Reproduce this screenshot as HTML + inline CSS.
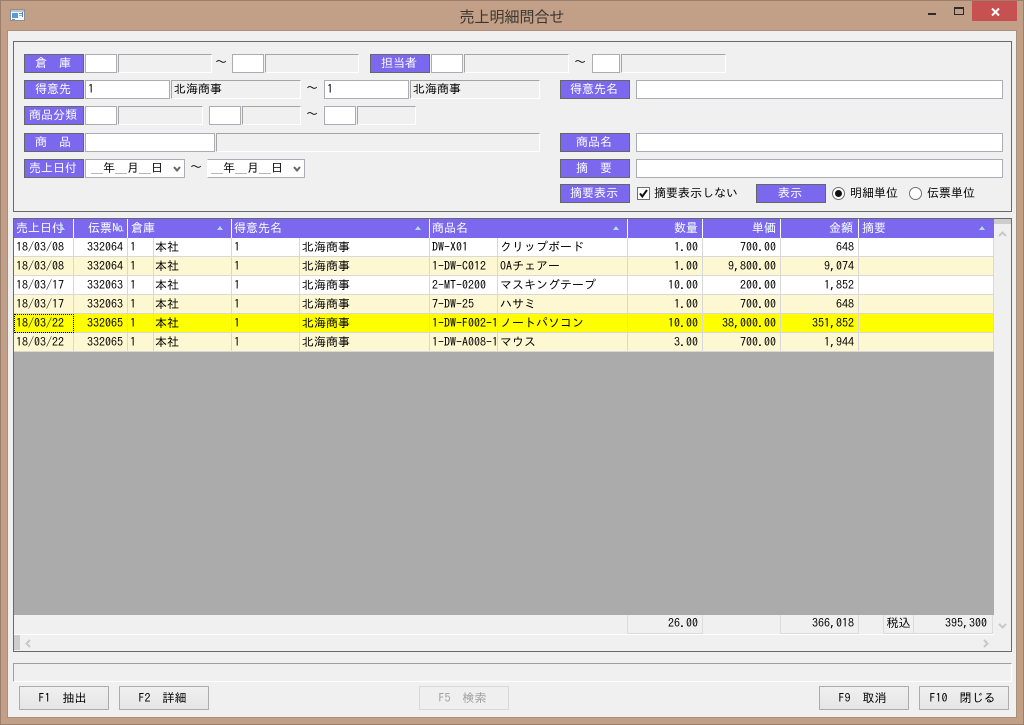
<!DOCTYPE html>
<html lang="ja"><head><meta charset="utf-8"><title>売上明細問合せ</title>
<style>
html,body{margin:0;padding:0}
body{width:1024px;height:725px;overflow:hidden;position:relative;background:#c2a088;font:12px/19px "IPAGothic","Liberation Mono","Noto Sans CJK JP",monospace;color:#000}
.a,.l,.w,.g,.s,.t,.b,.h,.f{position:absolute;box-sizing:border-box}
.l{background:#7b68ee;border:1px solid #666;color:#fff;text-align:center;height:19px;width:60px;line-height:17px;white-space:pre;padding-right:2px}
.w{background:#fff;border:1px solid #abadb3;height:19px;line-height:17px;padding-left:2px;white-space:pre}
.g{background:#f0f0f0;border:1px solid #fff;border-top-color:#a5a5a5;border-left-color:#a5a5a5;height:19px;line-height:17px;padding-left:2px;white-space:pre}
.t{white-space:pre;height:19px;line-height:19px}
.s{background:#fff;border:1px solid #abadb3;height:19px;line-height:17px;padding-left:5px;white-space:pre}
.s svg{position:absolute;right:3px;top:6px}
.b{top:686px;height:24px;width:90px;border:1px solid #acacac;background:linear-gradient(#f0f0f0,#e5e5e5);text-align:center;line-height:22px;white-space:pre;padding-right:3px}
.b.d{border-color:#d9d9d9;background:#efefef;color:#a0a0a0}
.h{top:219px;height:19px;background:#7b68ee;color:#fff;line-height:18px;white-space:pre;border-right:1px solid #fff}
.h i{position:absolute;width:0;height:0;border-left:3.5px solid transparent;border-right:3.5px solid transparent;border-bottom:4px solid #b5dce6;top:7px}
table{position:absolute;left:14px;top:238px;width:980px;border-collapse:separate;border-spacing:0;table-layout:fixed}
td{height:18px;padding:0 2px;box-sizing:content-box;border-right:1px solid #d8d8d8;border-bottom:1px solid #d8d8d8;white-space:nowrap;overflow:hidden;line-height:18px;font-size:12px}
td.n{text-align:right;padding-right:4px}
td.k{padding-left:1px}
tr.o td{background:#fff}tr.c td{background:#fdf8d2}tr.y td{background:#ff0}
.f{top:615px;height:19px;border:1px solid #dcdcdc;border-top:0;text-align:right;padding-right:4px;line-height:17px;white-space:pre}
</style></head><body>
<!-- window frame -->
<div class="a" style="left:0;top:0;width:1024px;height:725px;border:1px solid #9b7f6c"></div>
<svg class="a" style="left:10px;top:9px" width="15" height="12" viewBox="0 0 15 12"><rect x=".5" y=".5" width="14" height="11" fill="#f4f6f8" stroke="#8b8f95"/><rect x="1" y="1" width="13" height="2" fill="#b9c4d0"/><rect x="2" y="4" width="6" height="5" fill="#5b9bd5"/><rect x="9" y="4" width="4" height="1" fill="#7d8b99"/><rect x="9" y="6" width="4" height="1" fill="#a9b4bf"/><rect x="12" y="3" width="1" height="5" fill="#4a82b5"/><rect x="2" y="10" width="3" height="1" fill="#8b8f95"/></svg>
<div class="a" style="left:360px;top:6px;width:304px;height:22px;text-align:center;font:15px/22px 'Noto Sans CJK JP','IPAGothic',sans-serif;color:#3c3630">売上明細問合せ</div>
<div class="a" style="left:928px;top:13px;width:8px;height:2px;background:#2b2b2b"></div>
<div class="a" style="left:954px;top:7px;width:10px;height:8px;border:1px solid #2b2b2b;border-top-width:2px"></div>
<div class="a" style="left:972px;top:1px;width:45px;height:20px;background:#c75050"></div>
<svg class="a" style="left:991px;top:8px" width="9" height="8" viewBox="0 0 9 8"><path d="M1 0.5L8 7.5M8 0.5L1 7.5" stroke="#fff" stroke-width="2"/></svg>
<!-- client -->
<div class="a" style="left:7px;top:30px;width:1010px;height:688px;background:#f0f0f0;border:1px solid #a98f7c"></div>
<!-- search panel -->
<div class="a" style="left:13px;top:41px;width:999px;height:171px;border:1px solid #696969"></div>

<div class="l" style="left:24px;top:54px">倉　庫</div>
<div class="w" style="left:85px;top:54px;width:32px"></div>
<div class="g" style="left:118px;top:54px;width:94px"></div>
<div class="t" style="left:215px;top:53px">〜</div>
<div class="w" style="left:232px;top:54px;width:32px"></div>
<div class="g" style="left:265px;top:54px;width:94px"></div>
<div class="l" style="left:370px;top:54px">担当者</div>
<div class="w" style="left:431px;top:54px;width:32px"></div>
<div class="g" style="left:464px;top:54px;width:105px"></div>
<div class="t" style="left:574px;top:53px">〜</div>
<div class="w" style="left:592px;top:54px;width:28px"></div>
<div class="g" style="left:621px;top:54px;width:105px"></div>

<div class="l" style="left:24px;top:80px">得意先</div>
<div class="w" style="left:85px;top:80px;width:85px">1</div>
<div class="g" style="left:171px;top:80px;width:130px">北海商事</div>
<div class="t" style="left:306px;top:79px">〜</div>
<div class="w" style="left:324px;top:80px;width:85px">1</div>
<div class="g" style="left:410px;top:80px;width:130px">北海商事</div>
<div class="l" style="left:560px;top:80px;width:70px">得意先名</div>
<div class="w" style="left:636px;top:80px;width:367px"></div>

<div class="l" style="left:24px;top:106px">商品分類</div>
<div class="w" style="left:85px;top:106px;width:32px"></div>
<div class="g" style="left:118px;top:106px;width:85px"></div>
<div class="w" style="left:209px;top:106px;width:32px"></div>
<div class="g" style="left:242px;top:106px;width:59px"></div>
<div class="t" style="left:306px;top:105px">〜</div>
<div class="w" style="left:324px;top:106px;width:32px"></div>
<div class="g" style="left:357px;top:106px;width:59px"></div>

<div class="l" style="left:24px;top:133px">商　品</div>
<div class="w" style="left:85px;top:133px;width:130px"></div>
<div class="g" style="left:216px;top:133px;width:324px"></div>
<div class="l" style="left:560px;top:133px;width:70px">商品名</div>
<div class="w" style="left:636px;top:133px;width:367px"></div>

<div class="l" style="left:24px;top:159px">売上日付</div>
<div class="s" style="left:85px;top:159px;width:100px">__年__月__日<svg width="8" height="6" viewBox="0 0 8 6"><path d="M1 1L4 4.5L7 1" fill="none" stroke="#666" stroke-width="2"/></svg></div>
<div class="t" style="left:190px;top:158px">〜</div>
<div class="s" style="left:207px;top:159px;width:98px;border-left-color:#fff;padding-left:3px">__年__月__日<svg width="8" height="6" viewBox="0 0 8 6"><path d="M1 1L4 4.5L7 1" fill="none" stroke="#666" stroke-width="2"/></svg></div>
<div class="l" style="left:560px;top:159px;width:70px">摘　要</div>
<div class="w" style="left:636px;top:159px;width:367px"></div>

<div class="l" style="left:560px;top:184px;width:70px">摘要表示</div>
<svg class="a" style="left:637px;top:187px" width="13" height="13" viewBox="0 0 13 13"><rect x=".5" y=".5" width="12" height="12" fill="#fff" stroke="#707070"/><path d="M3 6.5L5.300 9.500L10 3" fill="none" stroke="#111" stroke-width="2"/></svg>
<div class="t" style="left:654px;top:184px">摘要表示しない</div>
<div class="l" style="left:756px;top:184px;width:70px">表示</div>
<svg class="a" style="left:832px;top:187px" width="13" height="13" viewBox="0 0 13 13"><circle cx="6.5" cy="6.5" r="6" fill="#fff" stroke="#707070"/><circle cx="6.5" cy="6.5" r="3.5" fill="#111"/></svg>
<div class="t" style="left:850px;top:184px">明細単位</div>
<svg class="a" style="left:909px;top:187px" width="13" height="13" viewBox="0 0 13 13"><circle cx="6.5" cy="6.5" r="6" fill="#fff" stroke="#707070"/></svg>
<div class="t" style="left:927px;top:184px">伝票単位</div>

<!-- grid -->
<div class="a" style="left:13px;top:218px;width:999px;height:434px;border:1px solid #696969;background:#f0f0f0"></div>
<div class="a" style="left:14px;top:352px;width:980px;height:263px;background:#ababab"></div>
<div class="h" style="left:14px;width:60px;padding-left:2px">売上日付<i style="left:45px"></i></div>
<div class="h" style="left:74px;width:54px;padding-left:14px">伝票№<i style="left:40px"></i></div>
<div class="h" style="left:128px;width:104px;padding-left:3px">倉庫<i style="left:89px"></i></div>
<div class="h" style="left:232px;width:198px;padding-left:2px">得意先名<i style="left:183px"></i></div>
<div class="h" style="left:430px;width:198px;padding-left:2px">商品名<i style="left:183px"></i></div>
<div class="h" style="left:628px;width:75px;text-align:right;padding-right:4px">数量<i style="left:60px"></i></div>
<div class="h" style="left:703px;width:78px;text-align:right;padding-right:4px">単価<i style="left:63px"></i></div>
<div class="h" style="left:781px;width:78px;text-align:right;padding-right:5px">金額<i style="left:62px"></i></div>
<div class="h" style="left:859px;width:135px;padding-left:3px;border-right:0">摘要<i style="left:120px"></i></div>

<table>
<colgroup><col style="width:60px"><col style="width:54px"><col style="width:26px"><col style="width:78px"><col style="width:68px"><col style="width:130px"><col style="width:68px"><col style="width:130px"><col style="width:75px"><col style="width:78px"><col style="width:78px"><col style="width:135px"></colgroup>
<tr class="o"><td>18/03/08</td><td class="n">332064</td><td>1</td><td class="k">本社</td><td>1</td><td>北海商事</td><td>DW-X01</td><td>クリップボード</td><td class="n">1.00</td><td class="n">700.00</td><td class="n">648</td><td></td></tr>
<tr class="c"><td>18/03/08</td><td class="n">332064</td><td>1</td><td class="k">本社</td><td>1</td><td>北海商事</td><td>1-DW-C012</td><td>OAチェアー</td><td class="n">1.00</td><td class="n">9,800.00</td><td class="n">9,074</td><td></td></tr>
<tr class="o"><td>18/03/17</td><td class="n">332063</td><td>1</td><td class="k">本社</td><td>1</td><td>北海商事</td><td>2-MT-0200</td><td>マスキングテープ</td><td class="n">10.00</td><td class="n">200.00</td><td class="n">1,852</td><td></td></tr>
<tr class="c"><td>18/03/17</td><td class="n">332063</td><td>1</td><td class="k">本社</td><td>1</td><td>北海商事</td><td>7-DW-25</td><td>ハサミ</td><td class="n">1.00</td><td class="n">700.00</td><td class="n">648</td><td></td></tr>
<tr class="y"><td style="outline:1px dotted #000;outline-offset:-1px">18/03/22</td><td class="n">332065</td><td>1</td><td class="k">本社</td><td>1</td><td>北海商事</td><td>1-DW-F002-1</td><td>ノートパソコン</td><td class="n">10.00</td><td class="n">38,000.00</td><td class="n">351,852</td><td></td></tr>
<tr class="c"><td>18/03/22</td><td class="n">332065</td><td>1</td><td class="k">本社</td><td>1</td><td>北海商事</td><td>1-DW-A008-1</td><td>マウス</td><td class="n">3.00</td><td class="n">700.00</td><td class="n">1,944</td><td></td></tr>
</table>

<!-- totals -->
<div class="f" style="left:627px;width:76px">26.00</div>
<div class="f" style="left:780px;width:79px">366,018</div>
<div class="f" style="left:883px;width:31px;text-align:center;padding:0">税込</div>
<div class="f" style="left:913px;width:80px;padding-right:5px">395,300</div>
<div class="a" style="left:14px;top:634px;width:980px;height:1px;background:#fff"></div>

<!-- scrollbars -->
<div class="a" style="left:994px;top:219px;width:17px;height:432px;background:#f0f0f0"></div>
<div class="a" style="left:994px;top:219px;width:17px;height:5px;background:#cdcdcd"></div>
<svg class="a" style="left:998px;top:231px" width="9" height="6" viewBox="0 0 9 6"><path d="M1 5L4.500 1.500L8 5" fill="none" stroke="#c8c8c8" stroke-width="2"/></svg>
<svg class="a" style="left:998px;top:623px" width="9" height="6" viewBox="0 0 9 6"><path d="M1 1L4.500 4.500L8 1" fill="none" stroke="#c8c8c8" stroke-width="2"/></svg>
<div class="a" style="left:14px;top:635px;width:6px;height:15px;background:#cdcdcd"></div>
<svg class="a" style="left:25px;top:639px" width="6" height="9" viewBox="0 0 6 9"><path d="M5 1L1.500 4.500L5 8" fill="none" stroke="#c8c8c8" stroke-width="2"/></svg>
<svg class="a" style="left:983px;top:639px" width="6" height="9" viewBox="0 0 6 9"><path d="M1 1L4.500 4.500L1 8" fill="none" stroke="#c8c8c8" stroke-width="2"/></svg>

<!-- status -->
<div class="a" style="left:13px;top:663px;width:999px;height:19px;border:1px solid #fff;border-top-color:#a0a0a0;border-left-color:#a0a0a0"></div>

<!-- buttons -->
<div class="b" style="left:19px">F1　抽出</div>
<div class="b" style="left:119px">F2　詳細</div>
<div class="b d" style="left:419px">F5　検索</div>
<div class="b" style="left:819px">F9　取消</div>
<div class="b" style="left:919px">F10　閉じる</div>
</body></html>
